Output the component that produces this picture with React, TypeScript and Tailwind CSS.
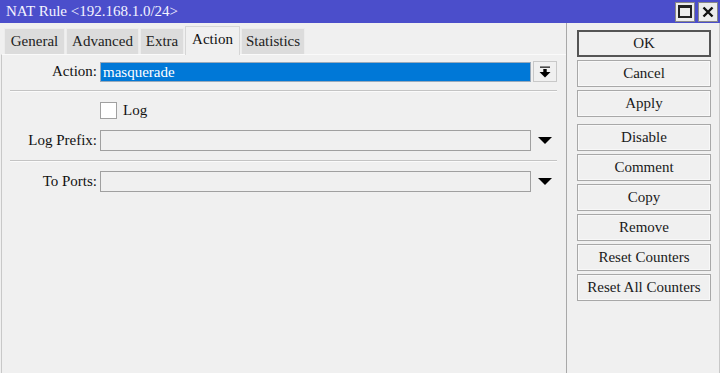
import React from "react";

const font = { fontFamily: '"Liberation Serif", "DejaVu Serif", serif' };

function Tab({ label, active, w }: { label: string; active?: boolean; w: string }) {
  if (active) {
    return (
      <div className={`${w} h-[29px] -mb-px relative z-10 flex items-center justify-center bg-[#f0f0f0] border border-b-0 border-[#d6d6d6] text-[15px] text-[#111] pb-[4px]`}>
        {label}
      </div>
    );
  }
  return (
    <div className={`${w} h-[26px] flex items-center justify-center bg-[#dcdcdc] border border-[#ececec] border-b-0 text-[15px] text-[#222] mt-[3px]`}>
      {label}
    </div>
  );
}

function Btn({ label, primary }: { label: string; primary?: boolean }) {
  return (
    <div
      className={`w-[134px] h-[27px] flex items-center justify-center text-[15px] text-[#1a1a1a] bg-[#f0f0f0] ${
        primary ? "border-2 border-[#555]" : "border border-[#a8a8a8] shadow-[inset_0_0_0_1px_#f8f8f8]"
      }`}
    >
      {label}
    </div>
  );
}

function Arrow() {
  return (
    <svg width="14" height="9" viewBox="0 0 14 9">
      <polygon points="0,1 14,1 7,8" fill="#000" />
    </svg>
  );
}

export default function App() {
  return (
    <div className="w-[720px] h-[373px] bg-[#f0f0f0] flex flex-col overflow-hidden" style={font}>
      {/* title bar */}
      <div className="h-[23px] bg-[#4b4ecb] flex items-center justify-between pl-[6px] pr-[2px]">
        <span className="text-[15px] text-[#f4f4ff] leading-none">NAT Rule &lt;192.168.1.0/24&gt;</span>
        <div className="flex gap-[3px]">
          <div className="w-[20px] h-[20px] bg-[#ececec] border border-[#888] flex items-center justify-center">
            <div className="w-[14px] h-[13px] border-2 border-[#222] border-t-[3px]" />
          </div>
          <div className="w-[20px] h-[20px] bg-[#ececec] border border-[#888] flex items-center justify-center">
            <svg width="12" height="12" viewBox="0 0 12 12">
              <path d="M1.5 1.5 L10.5 10.5 M10.5 1.5 L1.5 10.5" stroke="#111" strokeWidth="2.4" />
            </svg>
          </div>
        </div>
      </div>

      <div className="flex flex-1 min-h-0">
        {/* left */}
        <div className="w-[566px] flex flex-col pt-[2px] pl-[1px]">
          <div className="flex items-end pl-[3px] gap-[1px]">
            <Tab label="General" w="w-[61px]" />
            <Tab label="Advanced" w="w-[73px]" />
            <Tab label="Extra" w="w-[44px]" />
            <Tab label="Action" active w="w-[55px]" />
            <Tab label="Statistics" w="w-[64px]" />
          </div>
          <div className="flex-1 border-l border-t border-[#c8c8c8] border-t-[#fafafa] bg-[#f0f0f0] pt-[6px] pl-[8px] pr-[8px]">
            {/* Action */}
            <div className="flex items-center h-[21px]">
              <div className="w-[90px] text-right text-[15px] text-[#111] pr-[3px]">Action:</div>
              <div className="w-[431px] h-[20px] bg-[#0078d7] border border-[#9ab] text-white text-[15px] leading-[18px] pl-[2px]">
                masquerade
              </div>
              <div className="ml-[2px] w-[24px] h-[21px] border border-[#c8c8c8] bg-[#f0f0f0] flex items-center justify-center">
                <svg width="12" height="12" viewBox="0 0 12 12">
                  <rect x="1" y="0.5" width="10" height="1.3" fill="#222" />
                  <rect x="4.3" y="3" width="3.4" height="3.5" fill="#000" />
                  <polygon points="0.5,6 11.5,6 6,11.5" fill="#000" />
                </svg>
              </div>
            </div>
            <div className="mt-[8px] h-[2px] border-t border-[#c4c4c4] border-b border-b-[#fbfbfb] mr-[1px]" />
            {/* Log */}
            <div className="flex items-center h-[18px] mt-[9px]">
              <div className="w-[90px]" />
              <div className="w-[17px] h-[17px] bg-white border border-[#a0a0a0]" />
              <div className="ml-[6px] text-[15px] text-[#111]">Log</div>
            </div>
            {/* Log Prefix */}
            <div className="flex items-center h-[21px] mt-[11px]">
              <div className="w-[90px] text-right text-[15px] text-[#111] pr-[3px]">Log Prefix:</div>
              <div className="w-[431px] h-[21px] bg-[#f0f0f0] border border-[#a0a0a0]" />
              <div className="ml-[7px]"><Arrow /></div>
            </div>
            <div className="mt-[9px] h-[2px] border-t border-[#c4c4c4] border-b border-b-[#fbfbfb] mr-[1px]" />
            {/* To Ports */}
            <div className="flex items-center h-[21px] mt-[9px]">
              <div className="w-[90px] text-right text-[15px] text-[#111] pr-[3px]">To Ports:</div>
              <div className="w-[431px] h-[21px] bg-[#f0f0f0] border border-[#a0a0a0]" />
              <div className="ml-[7px]"><Arrow /></div>
            </div>
          </div>
        </div>

        {/* right */}
        <div className="flex-1 border-l border-[#a8a8a8] border-r border-r-[#c8c8c8] pl-[10px] pt-[7px] flex flex-col">
          <div className="flex flex-col gap-[3px]">
            <Btn label="OK" primary />
            <Btn label="Cancel" />
            <Btn label="Apply" />
          </div>
          <div className="flex flex-col gap-[3px] mt-[7px]">
            <Btn label="Disable" />
            <Btn label="Comment" />
            <Btn label="Copy" />
            <Btn label="Remove" />
            <Btn label="Reset Counters" />
            <Btn label="Reset All Counters" />
          </div>
        </div>
      </div>
    </div>
  );
}
